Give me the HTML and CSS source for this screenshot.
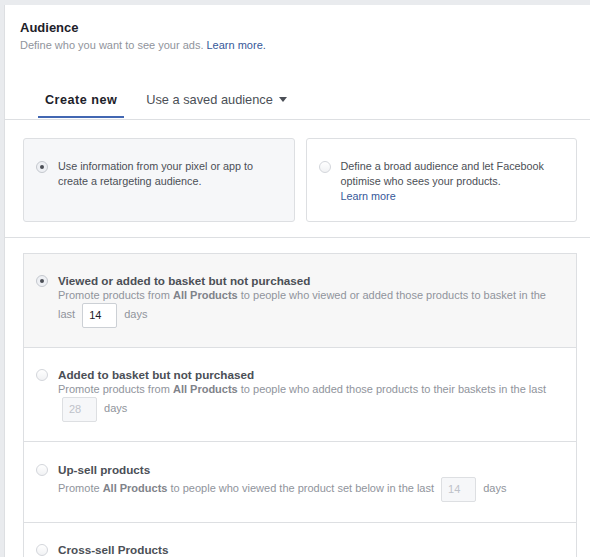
FILE: index.html
```html
<!DOCTYPE html>
<html>
<head>
<meta charset="utf-8">
<link rel="stylesheet" href="styles.css">
</head>
<body>
<div class="page">
  <div class="panel">
    <div class="header">
      <div class="title">Audience</div>
      <div class="subtitle">Define who you want to see your ads. <a class="link">Learn more.</a></div>
    </div>
    <div class="tabs">
      <div class="tab active">Create new</div>
      <div class="tab">Use a saved audience<span class="caret"></span></div>
    </div>
    <div class="cards">
      <div class="card selected">
        <span class="radio on"></span>
        <div class="card-text">Use information from your pixel or app to<br>create a retargeting audience.</div>
      </div>
      <div class="card">
        <span class="radio"></span>
        <div class="card-text">Define a broad audience and let Facebook<br>optimise who sees your products.<br><a class="link">Learn more</a></div>
      </div>
    </div>
    <div class="list">
      <div class="item selected">
        <span class="radio on"></span>
        <div class="item-body">
          <div class="item-title">Viewed or added to basket but not purchased</div>
          <div class="item-desc">Promote products from <b>All Products</b> to people who viewed or added those products to basket in the last <span class="num-box">14</span> days</div>
        </div>
      </div>
      <div class="item">
        <span class="radio"></span>
        <div class="item-body">
          <div class="item-title">Added to basket but not purchased</div>
          <div class="item-desc">Promote products from <b>All Products</b> to people who added those products to their baskets in the last <span class="num-box disabled">28</span> days</div>
        </div>
      </div>
      <div class="item roomy">
        <span class="radio"></span>
        <div class="item-body">
          <div class="item-title">Up-sell products</div>
          <div class="item-desc">Promote <b>All Products</b> to people who viewed the product set below in the last <span class="num-box disabled">14</span> days</div>
        </div>
      </div>
      <div class="item">
        <span class="radio"></span>
        <div class="item-body">
          <div class="item-title">Cross-sell Products</div>
          <div class="item-desc">Promote products from <b>All Products</b> to people who viewed products in the product set below</div>
        </div>
      </div>
    </div>
  </div>
</div>
</body>
</html>
```
FILE: styles.css
```css
html, body {
  margin: 0;
  padding: 0;
  background: #e9ebee;
  overflow: hidden;
}
body {
  font-family: "Liberation Sans", Arial, sans-serif;
  color: #4b4f56;
}
.page {
  padding: 5px 0 0 4px;
  height: 600px;
}
.panel {
  background: #fff;
  border-left: 1px solid #dddfe2;
  height: 100%;
}
.header {
  padding: 14px 15px 0 15px;
}
.title {
  font-size: 13px;
  font-weight: bold;
  line-height: 18px;
  color: #1d2129;
}
.subtitle {
  font-size: 11px;
  line-height: 16px;
  color: #90949c;
}
.link {
  color: #365899;
  text-decoration: none;
}
.tabs {
  display: flex;
  margin-top: 28px;
  padding-left: 33px;
  border-bottom: 1px solid #dddfe2;
}
.tab {
  height: 32px;
  line-height: 32px;
  padding: 3px 7px 0 7px;
  font-size: 12.8px;
  color: #4b4f56;
  border-bottom: 2px solid transparent;
  margin-bottom: 1px;
  display: flex;
  align-items: center;
}
.tab + .tab {
  margin-left: 15px;
}
.tab.active {
  color: #1d2129;
  font-weight: bold;
  font-size: 12.6px;
  letter-spacing: 0.5px;
  border-bottom-color: #4267b2;
}
.caret {
  width: 0;
  height: 0;
  border-left: 4.5px solid transparent;
  border-right: 4.5px solid transparent;
  border-top: 5px solid #4b4f56;
  margin-left: 6px;
  margin-top: -1px;
}
.cards {
  display: flex;
  gap: 11px;
  padding: 18px 13px 15px 18px;
  border-bottom: 1px solid #dddfe2;
}
.card {
  flex: 1;
  height: 84px;
  box-sizing: border-box;
  border: 1px solid #dddfe2;
  border-radius: 3px;
  background: #fff;
  display: flex;
  align-items: flex-start;
  padding: 20px 12px 0 12px;
}
.card.selected {
  background: #f6f7f9;
}
.card-text {
  font-size: 10.8px;
  line-height: 15px;
  color: #4b4f56;
}
.radio {
  flex: none;
  width: 12px;
  height: 12px;
  box-sizing: border-box;
  border-radius: 50%;
  border: 1px solid #d3d6db;
  background: linear-gradient(#fff, #f1f2f4);
  margin-top: 1.5px;
  margin-right: 10px;
  position: relative;
}
.radio.on {
  border-color: #c4c8ce;
  background: #eef0f4;
}
.radio.on::after {
  content: "";
  position: absolute;
  left: 3px;
  top: 3px;
  width: 4px;
  height: 4px;
  border-radius: 50%;
  background: #4b4f56;
}
.list {
  margin: 15px 13px 0 18px;
  border: 1px solid #dddfe2;
  border-bottom: none;
}
.item {
  display: flex;
  align-items: flex-start;
  padding: 19px 20px 19px 12px;
  border-bottom: 1px solid #dddfe2;
  background: #fff;
}
.item.roomy {
  padding-top: 20px;
  padding-bottom: 20px;
}
.item.selected {
  background: #f7f7f7;
}
.item-title {
  font-size: 11.7px;
  font-weight: bold;
  line-height: 15px;
  color: #4b4f56;
}
.item-desc {
  font-size: 11px;
  line-height: 15px;
  color: #90949c;
}
.item-desc b {
  color: #7f838a;
}
.num-box {
  display: inline-block;
  box-sizing: border-box;
  width: 35px;
  height: 25px;
  line-height: 23px;
  padding-left: 6px;
  margin: 0 4px;
  border: 1px solid #ccd0d5;
  border-radius: 2px;
  background: #fff;
  color: #1d2129;
  vertical-align: middle;
}
.num-box.disabled {
  background: #f6f7f9;
  color: #bec2c9;
  border-color: #dddfe2;
}
```
